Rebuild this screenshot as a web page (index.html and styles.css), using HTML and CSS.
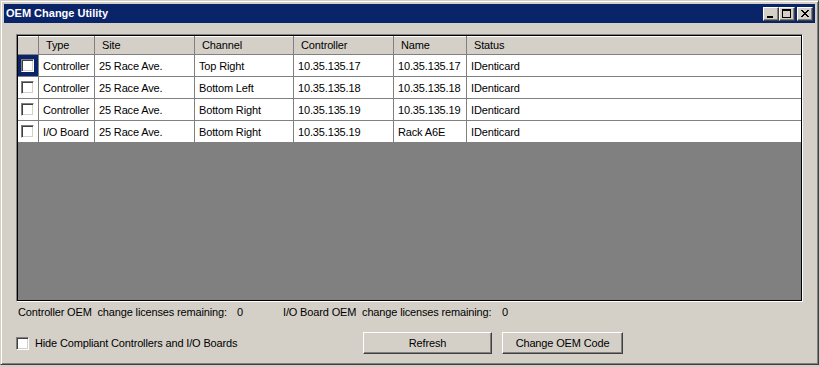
FILE: index.html
```html
<!DOCTYPE html>
<html lang="en">
<head>
    <meta charset="UTF-8">
    <meta name="viewport" content="width=device-width, initial-scale=1.0">
    <title>OEM Change Utility</title>
    <link rel="stylesheet" href="styles.css">
</head>
<body>
    <div class="window">
        <div class="titlebar">
            <span class="title">OEM Change Utility</span>
            <div class="caption-buttons">
                <div class="cap">
                    <svg width="14" height="12" viewBox="0 0 14 12" shape-rendering="crispEdges"><rect x="3" y="8" width="6" height="2"/></svg>
                </div>
                <div class="cap">
                    <svg width="14" height="12" viewBox="0 0 14 12" shape-rendering="crispEdges"><path fill-rule="evenodd" d="M2 1h9v9h-9z M3 3v6h7v-6z"/></svg>
                </div>
                <div class="cap cap-close">
                    <svg width="14" height="12" viewBox="0 0 14 12" shape-rendering="crispEdges"><path d="M3 2h2v1h-2z M9 2h2v1h-2z M4 3h2v1h-2z M8 3h2v1h-2z M5 4h4v1h-4z M6 5h2v1h-2z M5 6h4v1h-4z M4 7h2v1h-2z M8 7h2v1h-2z M3 8h2v1h-2z M9 8h2v1h-2z"/></svg>
                </div>
            </div>
        </div>

        <div class="content">
            <!-- liste des contrôleurs -->
            <div class="grid">
                <div class="list">
                    <div class="row head">
                        <div class="cell"></div>
                        <div class="cell">Type</div>
                        <div class="cell">Site</div>
                        <div class="cell">Channel</div>
                        <div class="cell">Controller</div>
                        <div class="cell">Name</div>
                        <div class="cell">Status</div>
                    </div>
                    <div class="row">
                        <div class="cell check selected"><span class="box"></span></div>
                        <div class="cell">Controller</div>
                        <div class="cell">25 Race Ave.</div>
                        <div class="cell">Top Right</div>
                        <div class="cell">10.35.135.17</div>
                        <div class="cell">10.35.135.17</div>
                        <div class="cell">IDenticard</div>
                    </div>
                    <div class="row">
                        <div class="cell check"><span class="box"></span></div>
                        <div class="cell">Controller</div>
                        <div class="cell">25 Race Ave.</div>
                        <div class="cell">Bottom Left</div>
                        <div class="cell">10.35.135.18</div>
                        <div class="cell">10.35.135.18</div>
                        <div class="cell">IDenticard</div>
                    </div>
                    <div class="row">
                        <div class="cell check"><span class="box"></span></div>
                        <div class="cell">Controller</div>
                        <div class="cell">25 Race Ave.</div>
                        <div class="cell">Bottom Right</div>
                        <div class="cell">10.35.135.19</div>
                        <div class="cell">10.35.135.19</div>
                        <div class="cell">IDenticard</div>
                    </div>
                    <div class="row">
                        <div class="cell check"><span class="box"></span></div>
                        <div class="cell">I/O Board</div>
                        <div class="cell">25 Race Ave.</div>
                        <div class="cell">Bottom Right</div>
                        <div class="cell">10.35.135.19</div>
                        <div class="cell">Rack A6E</div>
                        <div class="cell">IDenticard</div>
                    </div>
                </div>
            </div>

            <div class="licenses">
                <span class="lic-label">Controller OEM  change licenses remaining:</span>
                <span class="lic-value">0</span>
                <span class="lic-label">I/O Board OEM  change licenses remaining:</span>
                <span class="lic-value">0</span>
            </div>

            <div class="actions">
                <label class="hide"><span class="box"></span>Hide Compliant Controllers and I/O Boards</label>
                <div class="btn btn-refresh">Refresh</div>
                <div class="btn btn-change">Change OEM Code</div>
            </div>
        </div>
    </div>
</body>
</html>
```

FILE: styles.css
```css
body {
    margin: 0;
    background-color: #d4d0c8;
    font-family: "Liberation Sans", Arial, sans-serif;
    font-size: 11px;
    letter-spacing: -0.15px;
    color: #000;
}

.window {
    width: 819px;
    height: 365px;
    box-sizing: border-box;
    border: 1px solid;
    border-color: #d4d0c8 #404040 #404040 #d4d0c8;
    box-shadow: inset 1px 1px #fff, inset -1px -1px #808080;
    padding: 3px;
    background-color: #d4d0c8;
    display: flex;
    flex-direction: column;
}

.titlebar {
    height: 19px;
    flex-shrink: 0;
    background-color: #0a246a;
    color: #fff;
    display: flex;
    align-items: flex-start;
    justify-content: space-between;
    padding: 0 2px;
}

.title {
    font-weight: bold;
    letter-spacing: 0;
    line-height: 19px;
}

.caption-buttons {
    display: flex;
    margin-top: 3px;
}

.cap {
    width: 16px;
    height: 14px;
    box-sizing: border-box;
    border: 1px solid;
    border-color: #fff #404040 #404040 #fff;
    box-shadow: inset -1px -1px #808080;
    background-color: #d4d0c8;
}

.cap svg {
    display: block;
}

.cap-close {
    margin-left: 2px;
}

.content {
    flex: 1;
    padding: 11px 0 0 12px;
}

.grid {
    width: 787px;
    height: 268px;
    box-sizing: border-box;
    border: 1px solid;
    border-color: #808080 #fff #fff #808080;
}

.list {
    height: 100%;
    box-sizing: border-box;
    border: 1px solid #000;
    background-color: #808080;
}

.row {
    display: grid;
    grid-template-columns: 21px 56px 100px 99px 100px 73px 1fr;
    height: 22px;
    box-sizing: border-box;
    border-bottom: 1px solid #808080;
    background-color: #fff;
}

.row.head {
    height: 19px;
    background-color: #d4d0c8;
    box-shadow: inset 0 1px #fff;
}

.cell {
    border-right: 1px solid #808080;
    padding-left: 4px;
    display: flex;
    align-items: center;
    white-space: nowrap;
    overflow: hidden;
}

.head .cell {
    padding-left: 7px;
}

.cell:last-child {
    border-right: none;
}

.cell.check {
    padding-left: 3px;
}

.cell.selected {
    background-color: #0a246a;
}

.box {
    display: inline-block;
    width: 13px;
    height: 13px;
    box-sizing: border-box;
    border: 1px solid;
    border-color: #808080 #fff #fff #808080;
    box-shadow: inset 1px 1px #404040, inset -1px -1px #d4d0c8;
    background-color: #fff;
}

.licenses {
    display: flex;
    align-items: center;
    height: 20px;
    padding-left: 2px;
    white-space: pre;
}

.lic-label {
    width: 219px;
}

.lic-value {
    width: 46px;
}

.actions {
    display: flex;
    align-items: center;
    margin-top: 10px;
}

.hide {
    width: 347px;
    display: flex;
    align-items: center;
    gap: 6px;
}

.btn {
    height: 22px;
    box-sizing: border-box;
    border: 1px solid;
    border-color: #fff #404040 #404040 #fff;
    box-shadow: inset -1px -1px #808080;
    display: flex;
    align-items: center;
    justify-content: center;
}

.btn-refresh {
    width: 129px;
}

.btn-change {
    width: 121px;
    margin-left: 10px;
}
```
